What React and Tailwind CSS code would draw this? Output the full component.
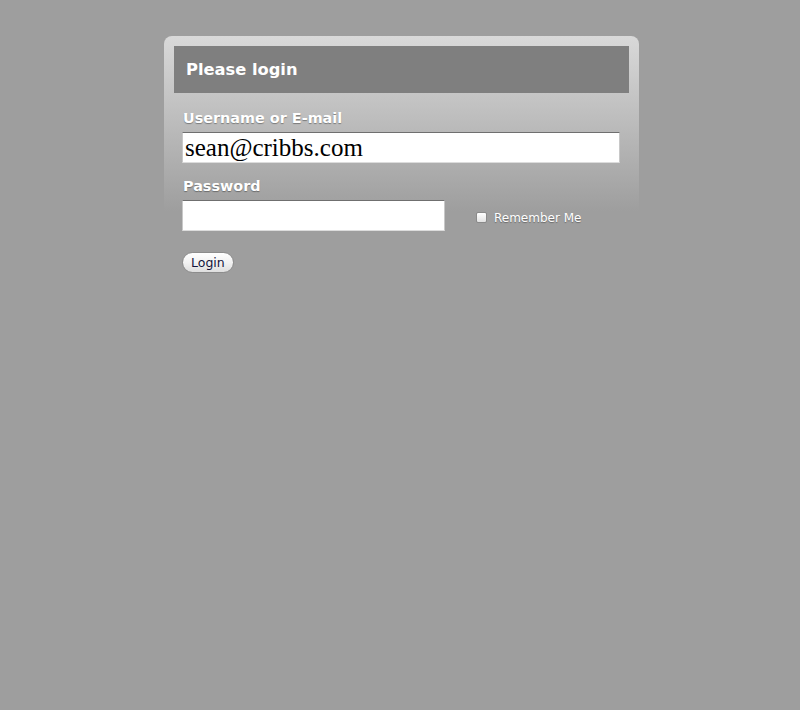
import { useState } from 'react';

export default function App() {
  const [email, setEmail] = useState('sean@cribbs.com');
  const [password, setPassword] = useState('');
  const [remember, setRemember] = useState(false);

  return (
    <main className="min-h-[710px] w-full bg-[#9e9e9e] font-['DejaVu_Sans',sans-serif]">
      <div className="ml-[164px] pt-[36px] w-[475px]">
        <div className="rounded-t-[8px] bg-[linear-gradient(to_bottom,#d9d9d9_0px,#9e9e9e_175px)] px-[10px] pt-[10px]">
          <div className="flex h-[47px] items-center bg-[#7f7f7f] pl-[12px]">
            <h1 className="mt-[1px] text-[16.3px] font-bold text-white">Please login</h1>
          </div>

          <form className="px-[8px] pt-[16px]" onSubmit={(e) => e.preventDefault()}>
            <label className="block pl-[1px] text-[14.4px] font-bold leading-[18px] text-white [text-shadow:0_1px_1px_rgba(0,0,0,0.35)]">
              Username or E-mail
            </label>
            <input
              className="mt-[5px] block h-[31px] w-[438px] border border-t-[#6f6f6f] border-x-[#c8c8c8] border-b-[#dcdcdc] bg-white px-[2px] font-['Liberation_Serif',serif] text-[25px] text-black outline-none"
              value={email}
              onChange={(e) => setEmail(e.target.value)}
            />

            <label className="mt-[14px] block pl-[1px] text-[14.4px] font-bold leading-[18px] text-white [text-shadow:0_1px_1px_rgba(0,0,0,0.35)]">
              Password
            </label>
            <div className="mt-[5px] flex items-center">
              <input
                type="password"
                className="block h-[31px] w-[263px] border border-t-[#6f6f6f] border-x-[#c8c8c8] border-b-[#dcdcdc] bg-white px-[2px] outline-none"
                value={password}
                onChange={(e) => setPassword(e.target.value)}
              />
              <label className="ml-[31px] mt-[4px] flex items-center gap-[7px] text-[12px] text-white [text-shadow:0_1px_1px_rgba(0,0,0,0.35)]">
                <input
                  type="checkbox"
                  checked={remember}
                  onChange={(e) => setRemember(e.target.checked)}
                  className="h-[11px] w-[11px] appearance-none rounded-[2px] border border-[#8a8a8a] bg-[linear-gradient(to_bottom,#ffffff,#e2e2e2)]"
                />
                Remember Me
              </label>
            </div>

            <button className="mt-[21px] h-[21px] rounded-full border border-[#8c8c8c] bg-[linear-gradient(to_bottom,#ffffff,#f2f2f2_50%,#dedede)] px-[8px] text-[12.5px] leading-[19px] text-[#14143c]">
              Login
            </button>
          </form>
        </div>
      </div>
    </main>
  );
}
